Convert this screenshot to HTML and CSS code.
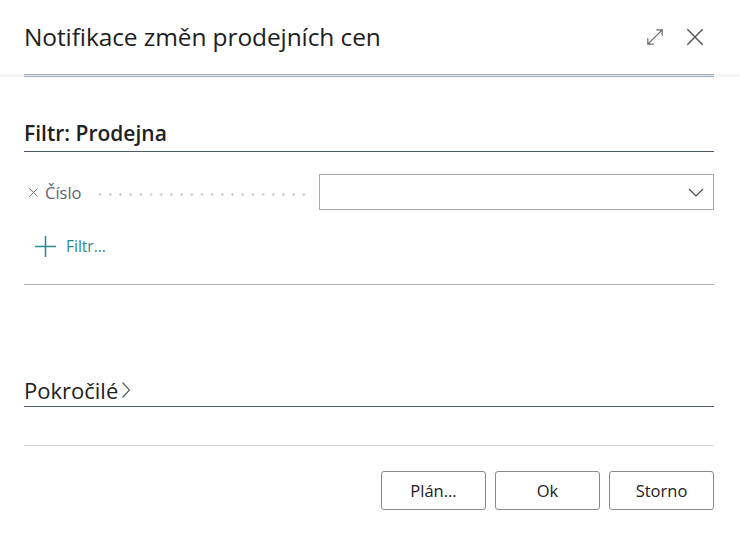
FILE: index.html
```html
<!DOCTYPE html>
<html lang="cs">
<head>
<meta charset="utf-8">
<title>Notifikace změn prodejních cen</title>
<link rel="stylesheet" href="styles.css">
</head>
<body>
<div class="dialog">
  <header class="header">
    <h1 class="title">Notifikace změn prodejních cen</h1>
    <div class="header-actions">
      <svg class="icon-expand" width="20" height="20" viewBox="0 0 20 20" fill="none" stroke="#666" stroke-width="1.3">
        <path d="M2 18 L18 2 M11.5 2 H18 V8.5 M2 11.5 V18 H8.5"/>
      </svg>
      <svg class="icon-close" width="20" height="20" viewBox="0 0 20 20" fill="none" stroke="#555" stroke-width="1.6">
        <path d="M1.5 1.5 L18.5 18.5 M18.5 1.5 L1.5 18.5"/>
      </svg>
    </div>
  </header>
  <div class="header-rule"><div class="header-rule-inner"></div></div>

  <section class="section filter-section">
    <h2 class="section-title">Filtr: Prodejna</h2>
    <div class="field-row">
      <div class="field-label">
        <svg class="remove" width="9" height="9" viewBox="0 0 9 9" fill="none" stroke="#7a7a7a" stroke-width="1"><path d="M0.5 0.5 L8.5 8.5 M8.5 0.5 L0.5 8.5"/></svg>
        <span class="label-text">Číslo</span>
        <span class="leader"></span>
      </div>
      <div class="select">
        <svg width="16" height="9" viewBox="0 0 16 9" fill="none" stroke="#444" stroke-width="1.1"><path d="M1 1 L8 8 L15 1"/></svg>
      </div>
    </div>
    <div class="add-filter">
      <svg width="21" height="21" viewBox="0 0 22 22" fill="none" stroke="#2b8c8f" stroke-width="1.6"><path d="M11 0 V22 M0 11 H22"/></svg>
      <span>Filtr...</span>
    </div>
  </section>

  <section class="section advanced">
    <h2 class="section-title adv-title">Pokročilé
      <svg width="10" height="18" viewBox="0 0 10 18" fill="none" stroke="#555" stroke-width="1.1"><path d="M1.5 1.5 L8.5 9 L1.5 16.5"/></svg>
    </h2>
  </section>

  <footer class="footer">
    <button class="btn">Plán...</button>
    <button class="btn">Ok</button>
    <button class="btn">Storno</button>
  </footer>
</div>
</body>
</html>
```

FILE: styles.css
```css
* { box-sizing: border-box; }
html, body { margin: 0; padding: 0; background: #fff; }
body {
  font-family: "Open Sans", "Noto Sans", "Liberation Sans", sans-serif;
  color: #222;
  width: 740px;
  height: 533px;
  overflow: hidden;
}
.dialog { width: 740px; }
.header {
  display: flex;
  align-items: center;
  justify-content: space-between;
  height: 74px;
  padding: 0 36px 0 24px;
}
.title {
  margin: 0;
  font-size: 24.5px;
  font-weight: 400;
  color: #1e1e1e;
  letter-spacing: -0.1px;
  padding-bottom: 2px;
}
.header-actions { display: flex; align-items: center; gap: 22px; }
.icon-expand { width: 18px; height: 18px; }
.icon-close { width: 18px; height: 18px; }
.header-rule {
  height: 3px;
  background: #f6f6f7;
  padding: 0 26px 0 24px;
}
.header-rule-inner {
  height: 3px;
  border-top: 1px solid #9ea7b6;
  border-bottom: 1px solid #9ea7b6;
  background: #e9ecf0;
}
.section { margin: 0 26px 0 24px; }
.filter-section {
  padding-top: 41px;
  border-bottom: 1px solid #aeb2b8;
  height: 208px;
}
.section-title {
  margin: 0;
  font-size: 21px;
  font-weight: 600;
  color: #212121;
  height: 34px;
  line-height: 30px;
  border-bottom: 1px solid #505a66;
}
.field-row {
  display: flex;
  align-items: center;
  margin-top: 22px;
  height: 36px;
}
.field-label {
  display: flex;
  align-items: center;
  width: 295px;
  color: #5f6670;
  font-size: 16.5px;
}
.remove { margin: 1px 7px 0 5px; flex: none; }
.label-text { color: #5c6470; }
.leader {
  flex: 1;
  height: 3px;
  margin: 4px 13px 0 13px;
  background-image: radial-gradient(circle, #c9c9c9 1.1px, transparent 1.4px);
  background-size: 10.2px 3px;
  background-repeat: repeat-x;
}
.select {
  flex: 1;
  height: 36px;
  border: 1px solid #a8a8a8;
  display: flex;
  align-items: center;
  justify-content: flex-end;
  padding-right: 9px;
}
.add-filter {
  display: flex;
  align-items: center;
  gap: 10px;
  margin-top: 25px;
  padding-left: 11px;
  color: #2b8a8e;
  font-size: 15.5px;
}
.advanced {
  padding-top: 88px;
  height: 161px;
  border-bottom: 1px solid #d0d0d0;
}
.adv-title {
  display: flex;
  align-items: center;
  gap: 3px;
  font-size: 22px;
  font-weight: 400;
  border-bottom-color: #4f5b6b;
}
.footer {
  display: flex;
  justify-content: flex-end;
  gap: 9px;
  padding: 25px 26px 0 24px;
}
.btn {
  width: 105px;
  height: 39px;
  background: #fff;
  border: 1px solid #8a8a8a;
  border-radius: 3px;
  font-family: inherit;
  font-size: 16.5px;
  color: #222;
  padding: 0;
}
```
